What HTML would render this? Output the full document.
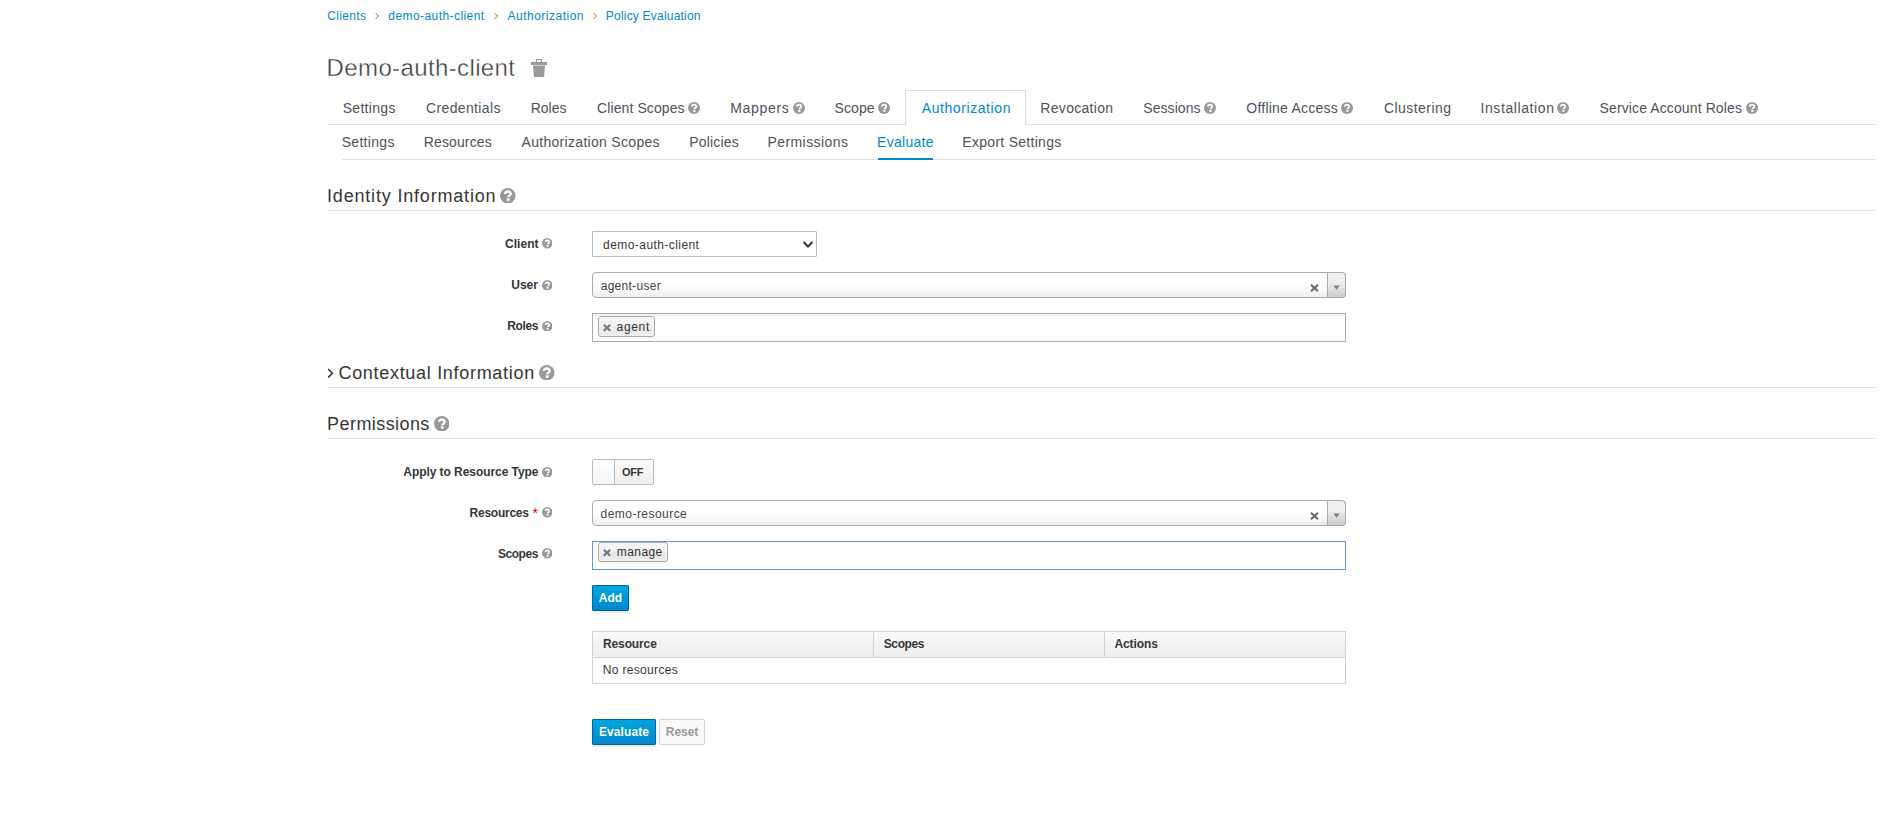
<!DOCTYPE html>
<html><head><meta charset="utf-8"><title>Policy Evaluation</title>
<style>
html,body{margin:0;padding:0;background:#fff;}
body{position:relative;width:1895px;height:818px;overflow:hidden;font-family:"Liberation Sans",sans-serif;}
.t{position:absolute;white-space:nowrap;line-height:1;}
.b{position:absolute;}
.ic{position:absolute;display:block;}
</style></head><body>
<svg class="ic" style="left:374.5px;top:12px;width:7px;height:9px" viewBox="0 0 7 9"><path d="M0.6 1.3L3.6 4.1L0.6 6.9" fill="none" stroke="#a0a0a0" stroke-width="1.05"/></svg>
<svg class="ic" style="left:494.0px;top:12px;width:7px;height:9px" viewBox="0 0 7 9"><path d="M0.6 1.3L3.6 4.1L0.6 6.9" fill="none" stroke="#a0a0a0" stroke-width="1.05"/></svg>
<svg class="ic" style="left:592.5px;top:12px;width:7px;height:9px" viewBox="0 0 7 9"><path d="M0.6 1.3L3.6 4.1L0.6 6.9" fill="none" stroke="#a0a0a0" stroke-width="1.05"/></svg>
<svg class="ic" style="left:531px;top:59px;width:16px;height:18px" viewBox="0 0 16 18"><path d="M5 0H11V3H10V1H6V3H5Z" fill="#999"/><rect x="0" y="3" width="16" height="3" fill="#999"/><rect x="2" y="6" width="12" height="1" fill="#ccc"/><path d="M2 7H14L13 18H3Z" fill="#999"/></svg>
<div class="b" style="left:327px;top:124px;width:1548px;height:1px;background:#e2e2e2"></div>
<div class="b" style="left:905px;top:90px;width:119px;height:34px;border:1px solid #dcdcdc;border-bottom:0;background:#fff"></div>
<div class="b" style="left:342px;top:159px;width:1533px;height:1px;background:#e2e2e2"></div>
<div class="b" style="left:878px;top:158px;width:55px;height:2px;background:#0088ce"></div>
<svg class="ic" style="left:687.90px;top:102.00px;width:12px;height:12px" viewBox="0 0 16 16"><circle cx="8" cy="8" r="8" fill="#999"/><path d="M5.2 6.2C5.3 4.5 6.5 3.6 8.1 3.6C9.9 3.6 11 4.6 11 6C11 7.3 10.1 7.8 9.4 8.2C8.8 8.6 8.6 8.9 8.6 9.6" fill="none" stroke="#fff" stroke-width="2.4"/><rect x="7.1" y="10.6" width="2.8" height="2.6" fill="#fff"/></svg>
<svg class="ic" style="left:792.70px;top:102.00px;width:12px;height:12px" viewBox="0 0 16 16"><circle cx="8" cy="8" r="8" fill="#999"/><path d="M5.2 6.2C5.3 4.5 6.5 3.6 8.1 3.6C9.9 3.6 11 4.6 11 6C11 7.3 10.1 7.8 9.4 8.2C8.8 8.6 8.6 8.9 8.6 9.6" fill="none" stroke="#fff" stroke-width="2.4"/><rect x="7.1" y="10.6" width="2.8" height="2.6" fill="#fff"/></svg>
<svg class="ic" style="left:878.40px;top:102.00px;width:12px;height:12px" viewBox="0 0 16 16"><circle cx="8" cy="8" r="8" fill="#999"/><path d="M5.2 6.2C5.3 4.5 6.5 3.6 8.1 3.6C9.9 3.6 11 4.6 11 6C11 7.3 10.1 7.8 9.4 8.2C8.8 8.6 8.6 8.9 8.6 9.6" fill="none" stroke="#fff" stroke-width="2.4"/><rect x="7.1" y="10.6" width="2.8" height="2.6" fill="#fff"/></svg>
<svg class="ic" style="left:1203.70px;top:102.00px;width:12px;height:12px" viewBox="0 0 16 16"><circle cx="8" cy="8" r="8" fill="#999"/><path d="M5.2 6.2C5.3 4.5 6.5 3.6 8.1 3.6C9.9 3.6 11 4.6 11 6C11 7.3 10.1 7.8 9.4 8.2C8.8 8.6 8.6 8.9 8.6 9.6" fill="none" stroke="#fff" stroke-width="2.4"/><rect x="7.1" y="10.6" width="2.8" height="2.6" fill="#fff"/></svg>
<svg class="ic" style="left:1341.40px;top:102.00px;width:12px;height:12px" viewBox="0 0 16 16"><circle cx="8" cy="8" r="8" fill="#999"/><path d="M5.2 6.2C5.3 4.5 6.5 3.6 8.1 3.6C9.9 3.6 11 4.6 11 6C11 7.3 10.1 7.8 9.4 8.2C8.8 8.6 8.6 8.9 8.6 9.6" fill="none" stroke="#fff" stroke-width="2.4"/><rect x="7.1" y="10.6" width="2.8" height="2.6" fill="#fff"/></svg>
<svg class="ic" style="left:1557.30px;top:102.00px;width:12px;height:12px" viewBox="0 0 16 16"><circle cx="8" cy="8" r="8" fill="#999"/><path d="M5.2 6.2C5.3 4.5 6.5 3.6 8.1 3.6C9.9 3.6 11 4.6 11 6C11 7.3 10.1 7.8 9.4 8.2C8.8 8.6 8.6 8.9 8.6 9.6" fill="none" stroke="#fff" stroke-width="2.4"/><rect x="7.1" y="10.6" width="2.8" height="2.6" fill="#fff"/></svg>
<svg class="ic" style="left:1745.50px;top:102.00px;width:12px;height:12px" viewBox="0 0 16 16"><circle cx="8" cy="8" r="8" fill="#999"/><path d="M5.2 6.2C5.3 4.5 6.5 3.6 8.1 3.6C9.9 3.6 11 4.6 11 6C11 7.3 10.1 7.8 9.4 8.2C8.8 8.6 8.6 8.9 8.6 9.6" fill="none" stroke="#fff" stroke-width="2.4"/><rect x="7.1" y="10.6" width="2.8" height="2.6" fill="#fff"/></svg>
<div class="b" style="left:327px;top:210px;width:1548px;height:1px;background:#e2e2e2"></div>
<div class="b" style="left:327px;top:387px;width:1548px;height:1px;background:#e2e2e2"></div>
<div class="b" style="left:327px;top:438px;width:1548px;height:1px;background:#e2e2e2"></div>
<svg class="ic" style="left:500.25px;top:187.55px;width:15.5px;height:15.5px" viewBox="0 0 16 16"><circle cx="8" cy="8" r="8" fill="#999"/><path d="M5.2 6.2C5.3 4.5 6.5 3.6 8.1 3.6C9.9 3.6 11 4.6 11 6C11 7.3 10.1 7.8 9.4 8.2C8.8 8.6 8.6 8.9 8.6 9.6" fill="none" stroke="#fff" stroke-width="2.4"/><rect x="7.1" y="10.6" width="2.8" height="2.6" fill="#fff"/></svg>
<svg class="ic" style="left:539.05px;top:364.75px;width:15.5px;height:15.5px" viewBox="0 0 16 16"><circle cx="8" cy="8" r="8" fill="#999"/><path d="M5.2 6.2C5.3 4.5 6.5 3.6 8.1 3.6C9.9 3.6 11 4.6 11 6C11 7.3 10.1 7.8 9.4 8.2C8.8 8.6 8.6 8.9 8.6 9.6" fill="none" stroke="#fff" stroke-width="2.4"/><rect x="7.1" y="10.6" width="2.8" height="2.6" fill="#fff"/></svg>
<svg class="ic" style="left:433.95px;top:415.65px;width:15.5px;height:15.5px" viewBox="0 0 16 16"><circle cx="8" cy="8" r="8" fill="#999"/><path d="M5.2 6.2C5.3 4.5 6.5 3.6 8.1 3.6C9.9 3.6 11 4.6 11 6C11 7.3 10.1 7.8 9.4 8.2C8.8 8.6 8.6 8.9 8.6 9.6" fill="none" stroke="#fff" stroke-width="2.4"/><rect x="7.1" y="10.6" width="2.8" height="2.6" fill="#fff"/></svg>
<svg class="ic" style="left:326px;top:367px;width:9px;height:12px" viewBox="0 0 9 12"><path d="M2.2 2L6.4 6.2L2.2 10.4" fill="none" stroke="#363636" stroke-width="1.6"/></svg>
<svg class="ic" style="left:541.65px;top:238.35px;width:10.5px;height:10.5px" viewBox="0 0 16 16"><circle cx="8" cy="8" r="8" fill="#999"/><path d="M5.2 6.2C5.3 4.5 6.5 3.6 8.1 3.6C9.9 3.6 11 4.6 11 6C11 7.3 10.1 7.8 9.4 8.2C8.8 8.6 8.6 8.9 8.6 9.6" fill="none" stroke="#fff" stroke-width="2.4"/><rect x="7.1" y="10.6" width="2.8" height="2.6" fill="#fff"/></svg>
<svg class="ic" style="left:541.65px;top:279.65px;width:10.5px;height:10.5px" viewBox="0 0 16 16"><circle cx="8" cy="8" r="8" fill="#999"/><path d="M5.2 6.2C5.3 4.5 6.5 3.6 8.1 3.6C9.9 3.6 11 4.6 11 6C11 7.3 10.1 7.8 9.4 8.2C8.8 8.6 8.6 8.9 8.6 9.6" fill="none" stroke="#fff" stroke-width="2.4"/><rect x="7.1" y="10.6" width="2.8" height="2.6" fill="#fff"/></svg>
<svg class="ic" style="left:541.65px;top:320.55px;width:10.5px;height:10.5px" viewBox="0 0 16 16"><circle cx="8" cy="8" r="8" fill="#999"/><path d="M5.2 6.2C5.3 4.5 6.5 3.6 8.1 3.6C9.9 3.6 11 4.6 11 6C11 7.3 10.1 7.8 9.4 8.2C8.8 8.6 8.6 8.9 8.6 9.6" fill="none" stroke="#fff" stroke-width="2.4"/><rect x="7.1" y="10.6" width="2.8" height="2.6" fill="#fff"/></svg>
<svg class="ic" style="left:541.65px;top:466.55px;width:10.5px;height:10.5px" viewBox="0 0 16 16"><circle cx="8" cy="8" r="8" fill="#999"/><path d="M5.2 6.2C5.3 4.5 6.5 3.6 8.1 3.6C9.9 3.6 11 4.6 11 6C11 7.3 10.1 7.8 9.4 8.2C8.8 8.6 8.6 8.9 8.6 9.6" fill="none" stroke="#fff" stroke-width="2.4"/><rect x="7.1" y="10.6" width="2.8" height="2.6" fill="#fff"/></svg>
<svg class="ic" style="left:541.65px;top:507.45px;width:10.5px;height:10.5px" viewBox="0 0 16 16"><circle cx="8" cy="8" r="8" fill="#999"/><path d="M5.2 6.2C5.3 4.5 6.5 3.6 8.1 3.6C9.9 3.6 11 4.6 11 6C11 7.3 10.1 7.8 9.4 8.2C8.8 8.6 8.6 8.9 8.6 9.6" fill="none" stroke="#fff" stroke-width="2.4"/><rect x="7.1" y="10.6" width="2.8" height="2.6" fill="#fff"/></svg>
<svg class="ic" style="left:541.65px;top:548.25px;width:10.5px;height:10.5px" viewBox="0 0 16 16"><circle cx="8" cy="8" r="8" fill="#999"/><path d="M5.2 6.2C5.3 4.5 6.5 3.6 8.1 3.6C9.9 3.6 11 4.6 11 6C11 7.3 10.1 7.8 9.4 8.2C8.8 8.6 8.6 8.9 8.6 9.6" fill="none" stroke="#fff" stroke-width="2.4"/><rect x="7.1" y="10.6" width="2.8" height="2.6" fill="#fff"/></svg>
<span class="t" style="left:532.5px;top:506px;font-size:14px;line-height:14px;color:#d00;font-weight:400">*</span>
<div class="b" style="left:592px;top:231px;width:223px;height:24px;border:1px solid #bbb;border-radius:1px;background:#fff"></div>
<svg class="ic" style="left:802px;top:240px;width:12px;height:9px" viewBox="0 0 12 9"><path d="M1.5 2L6 6.5L10.5 2" fill="none" stroke="#333" stroke-width="2"/></svg>
<div class="b" style="left:592px;top:272px;width:752px;height:24px;border:1px solid #aaa;border-radius:4px;background:linear-gradient(to top,#eee 0%,#fff 50%)"></div>
<div class="b" style="left:1327px;top:272px;width:17px;height:24px;border-left:1px solid #aaa;border-top:1px solid #aaa;border-bottom:1px solid #aaa;border-right:1px solid #aaa;border-radius:0 4px 4px 0;background:linear-gradient(to top,#ccc 0%,#eee 60%)"></div>
<svg class="ic" style="left:1333px;top:285px;width:7px;height:5px" viewBox="0 0 7 5"><path d="M0.3 0.5H6.7L3.5 4.7Z" fill="#808080"/></svg>
<svg class="ic" style="left:1310px;top:284px;width:9px;height:8px" viewBox="0 0 9 8"><path d="M1 0.8L8 7.2M8 0.8L1 7.2" stroke="#666" stroke-width="2"/></svg>
<div class="b" style="left:592px;top:500px;width:752px;height:24px;border:1px solid #aaa;border-radius:4px;background:linear-gradient(to top,#eee 0%,#fff 50%)"></div>
<div class="b" style="left:1327px;top:500px;width:17px;height:24px;border-left:1px solid #aaa;border-top:1px solid #aaa;border-bottom:1px solid #aaa;border-right:1px solid #aaa;border-radius:0 4px 4px 0;background:linear-gradient(to top,#ccc 0%,#eee 60%)"></div>
<svg class="ic" style="left:1333px;top:513px;width:7px;height:5px" viewBox="0 0 7 5"><path d="M0.3 0.5H6.7L3.5 4.7Z" fill="#808080"/></svg>
<svg class="ic" style="left:1310px;top:512px;width:9px;height:8px" viewBox="0 0 9 8"><path d="M1 0.8L8 7.2M8 0.8L1 7.2" stroke="#666" stroke-width="2"/></svg>
<div class="b" style="left:592px;top:313px;width:752px;height:27px;border:1px solid #aaa;background:linear-gradient(to bottom,#eee 1%,#fff 15%)"></div>
<div class="b" style="left:592px;top:541px;width:752px;height:27px;border:1px solid #5897fb;background:#fff"></div>
<div class="b" style="left:598px;top:316px;width:55px;height:19px;border:1px solid #aaa;border-radius:3px;background:linear-gradient(to bottom,#f4f4f4 20%,#f0f0f0 50%,#e8e8e8 52%,#eee 100%);box-shadow:0 0 2px #fff inset,0 1px 0 rgba(0,0,0,.05)"></div>
<div class="b" style="left:598px;top:542px;width:68px;height:18px;border:1px solid #aaa;border-radius:3px;background:linear-gradient(to bottom,#f4f4f4 20%,#f0f0f0 50%,#e8e8e8 52%,#eee 100%);box-shadow:0 0 2px #fff inset,0 1px 0 rgba(0,0,0,.05)"></div>
<svg class="ic" style="left:603.4px;top:324.2px;width:8px;height:7.5px" viewBox="0 0 8 7.5"><path d="M0.8 0.8L7.2 6.7M7.2 0.8L0.8 6.7" stroke="#777" stroke-width="2.2"/></svg>
<svg class="ic" style="left:603.1px;top:549.2px;width:8px;height:7.5px" viewBox="0 0 8 7.5"><path d="M0.8 0.8L7.2 6.7M7.2 0.8L0.8 6.7" stroke="#777" stroke-width="2.2"/></svg>
<div class="b" style="left:592px;top:459px;width:60px;height:24px;border:1px solid #bbb;border-radius:2px;background:linear-gradient(to bottom,#fafafa 0,#ededed 100%)"></div>
<div class="b" style="left:593px;top:460px;width:21px;height:24px;border-right:1px solid #bbb;background:linear-gradient(to bottom,#fff 0,#f5f5f5 100%)"></div>
<div class="b" style="left:592px;top:585px;width:35px;height:24px;border:1px solid #00659c;border-radius:1px;background:linear-gradient(to bottom,#00a6de 0,#0087cd 100%);box-shadow:0 2px 3px rgba(3,3,3,.1)"></div>
<div class="b" style="left:592px;top:631px;width:752px;height:51px;border:1px solid #d1d1d1;background:#fff"></div>
<div class="b" style="left:593px;top:632px;width:752px;height:25px;border-bottom:1px solid #d1d1d1;background:linear-gradient(to bottom,#fafafa 0,#ededed 100%);box-sizing:border-box;width:752px;height:26px"></div>
<div class="b" style="left:873px;top:632px;width:1px;height:25px;background:#d1d1d1"></div>
<div class="b" style="left:1104px;top:632px;width:1px;height:25px;background:#d1d1d1"></div>
<div class="b" style="left:592px;top:719px;width:62px;height:24px;border:1px solid #00659c;border-radius:1px;background:linear-gradient(to bottom,#00a6de 0,#0087cd 100%);box-shadow:0 2px 3px rgba(3,3,3,.1)"></div>
<div class="b" style="left:659px;top:719px;width:44px;height:24px;border:1px solid #d4d4d4;border-radius:1px;background:#f9f9f9"></div>
<span id="bc1" class="t" style="left:327.29px;top:9.84px;font-size:12px;color:#0088ce;letter-spacing:0.323px;">Clients</span>
<span id="bc2" class="t" style="left:388.30px;top:9.84px;font-size:12px;color:#0088ce;letter-spacing:0.431px;">demo-auth-client</span>
<span id="bc3" class="t" style="left:507.53px;top:9.84px;font-size:12px;color:#0088ce;letter-spacing:0.495px;">Authorization</span>
<span id="bc4" class="t" style="left:605.84px;top:9.84px;font-size:12px;color:#0088ce;letter-spacing:0.205px;">Policy Evaluation</span>
<span id="title" class="t" style="left:326.61px;top:55.68px;font-size:24px;color:#363636;letter-spacing:0.374px;-webkit-text-stroke:0.4px #fff;">Demo-auth-client</span>
<span id="t1" class="t" style="left:342.70px;top:101.15px;font-size:14px;color:#4d5258;letter-spacing:0.303px;">Settings</span>
<span id="t2" class="t" style="left:426.09px;top:101.15px;font-size:14px;color:#4d5258;letter-spacing:0.349px;">Credentials</span>
<span id="t3" class="t" style="left:530.64px;top:101.15px;font-size:14px;color:#4d5258;letter-spacing:0.050px;">Roles</span>
<span id="t4" class="t" style="left:597.10px;top:101.15px;font-size:14px;color:#4d5258;letter-spacing:0.089px;">Client Scopes</span>
<span id="t5" class="t" style="left:730.23px;top:101.15px;font-size:14px;color:#4d5258;letter-spacing:0.688px;">Mappers</span>
<span id="t6" class="t" style="left:834.58px;top:101.15px;font-size:14px;color:#4d5258;letter-spacing:0.068px;">Scope</span>
<span id="t7" class="t" style="left:921.76px;top:101.15px;font-size:14px;color:#0088ce;letter-spacing:0.579px;">Authorization</span>
<span id="t8" class="t" style="left:1040.37px;top:101.15px;font-size:14px;color:#4d5258;letter-spacing:0.292px;">Revocation</span>
<span id="t9" class="t" style="left:1143.31px;top:101.15px;font-size:14px;color:#4d5258;letter-spacing:0.060px;">Sessions</span>
<span id="t10" class="t" style="left:1246.37px;top:101.15px;font-size:14px;color:#4d5258;letter-spacing:0.222px;">Offline Access</span>
<span id="t11" class="t" style="left:1383.91px;top:101.15px;font-size:14px;color:#4d5258;letter-spacing:0.452px;">Clustering</span>
<span id="t12" class="t" style="left:1480.51px;top:101.15px;font-size:14px;color:#4d5258;letter-spacing:0.590px;">Installation</span>
<span id="t13" class="t" style="left:1599.58px;top:101.15px;font-size:14px;color:#4d5258;letter-spacing:0.112px;">Service Account Roles</span>
<span id="s1" class="t" style="left:341.70px;top:135.15px;font-size:14px;color:#4d5258;letter-spacing:0.303px;">Settings</span>
<span id="s2" class="t" style="left:423.79px;top:135.15px;font-size:14px;color:#4d5258;letter-spacing:0.122px;">Resources</span>
<span id="s3" class="t" style="left:521.50px;top:135.15px;font-size:14px;color:#4d5258;letter-spacing:0.304px;">Authorization Scopes</span>
<span id="s4" class="t" style="left:689.23px;top:135.15px;font-size:14px;color:#4d5258;letter-spacing:0.190px;">Policies</span>
<span id="s5" class="t" style="left:767.51px;top:135.15px;font-size:14px;color:#4d5258;letter-spacing:0.419px;">Permissions</span>
<span id="s6" class="t" style="left:877.05px;top:135.15px;font-size:14px;color:#0088ce;letter-spacing:0.285px;">Evaluate</span>
<span id="s7" class="t" style="left:962.37px;top:135.15px;font-size:14px;color:#4d5258;letter-spacing:0.280px;">Export Settings</span>
<span id="h1" class="t" style="left:327.01px;top:186.76px;font-size:18px;color:#363636;letter-spacing:0.816px;">Identity Information</span>
<span id="h2" class="t" style="left:338.46px;top:363.76px;font-size:18px;color:#363636;letter-spacing:0.697px;">Contextual Information</span>
<span id="h3" class="t" style="left:327.11px;top:414.76px;font-size:18px;color:#363636;letter-spacing:0.423px;">Permissions</span>
<span id="l1" class="t" style="left:504.98px;top:237.84px;font-size:12px;color:#363636;font-weight:700;letter-spacing:0.041px;">Client</span>
<span id="l2" class="t" style="left:511.35px;top:278.84px;font-size:12px;color:#363636;font-weight:700;letter-spacing:-0.052px;">User</span>
<span id="l3" class="t" style="left:507.16px;top:319.84px;font-size:12px;color:#363636;font-weight:700;letter-spacing:-0.369px;">Roles</span>
<span id="l4" class="t" style="left:403.29px;top:465.84px;font-size:12px;color:#363636;font-weight:700;letter-spacing:-0.059px;">Apply to Resource Type</span>
<span id="l5" class="t" style="left:469.54px;top:506.84px;font-size:12px;color:#363636;font-weight:700;letter-spacing:-0.247px;">Resources</span>
<span id="l6" class="t" style="left:497.89px;top:547.84px;font-size:12px;color:#363636;font-weight:700;letter-spacing:-0.441px;">Scopes</span>
<span id="c1" class="t" style="left:603.12px;top:238.84px;font-size:12px;color:#363636;letter-spacing:0.431px;">demo-auth-client</span>
<span id="c2" class="t" style="left:600.70px;top:279.84px;font-size:12px;color:#444;letter-spacing:0.289px;">agent-user</span>
<span id="c3" class="t" style="left:616.62px;top:320.84px;font-size:12px;color:#333;letter-spacing:0.652px;">agent</span>
<span id="c4" class="t" style="left:622.01px;top:466.69px;font-size:11px;color:#363636;font-weight:700;letter-spacing:-0.308px;">OFF</span>
<span id="c5" class="t" style="left:600.62px;top:507.84px;font-size:12px;color:#444;letter-spacing:0.454px;">demo-resource</span>
<span id="c6" class="t" style="left:616.82px;top:545.84px;font-size:12px;color:#333;letter-spacing:0.424px;">manage</span>
<span id="c7" class="t" style="left:598.64px;top:591.84px;font-size:12px;color:#fff;font-weight:700;letter-spacing:0.100px;">Add</span>
<span id="c8" class="t" style="left:603.06px;top:637.84px;font-size:12px;color:#363636;font-weight:700;letter-spacing:-0.132px;">Resource</span>
<span id="c9" class="t" style="left:883.75px;top:637.84px;font-size:12px;color:#363636;font-weight:700;letter-spacing:-0.384px;">Scopes</span>
<span id="c10" class="t" style="left:1114.40px;top:637.84px;font-size:12px;color:#363636;font-weight:700;letter-spacing:-0.077px;">Actions</span>
<span id="c11" class="t" style="left:602.84px;top:663.84px;font-size:12px;color:#363636;letter-spacing:0.319px;">No resources</span>
<span id="c12" class="t" style="left:598.90px;top:725.84px;font-size:12px;color:#fff;font-weight:700;letter-spacing:0.099px;">Evaluate</span>
<span id="c13" class="t" style="left:665.87px;top:725.84px;font-size:12px;color:#9a9a9a;font-weight:700;letter-spacing:-0.081px;">Reset</span>
</body></html>
